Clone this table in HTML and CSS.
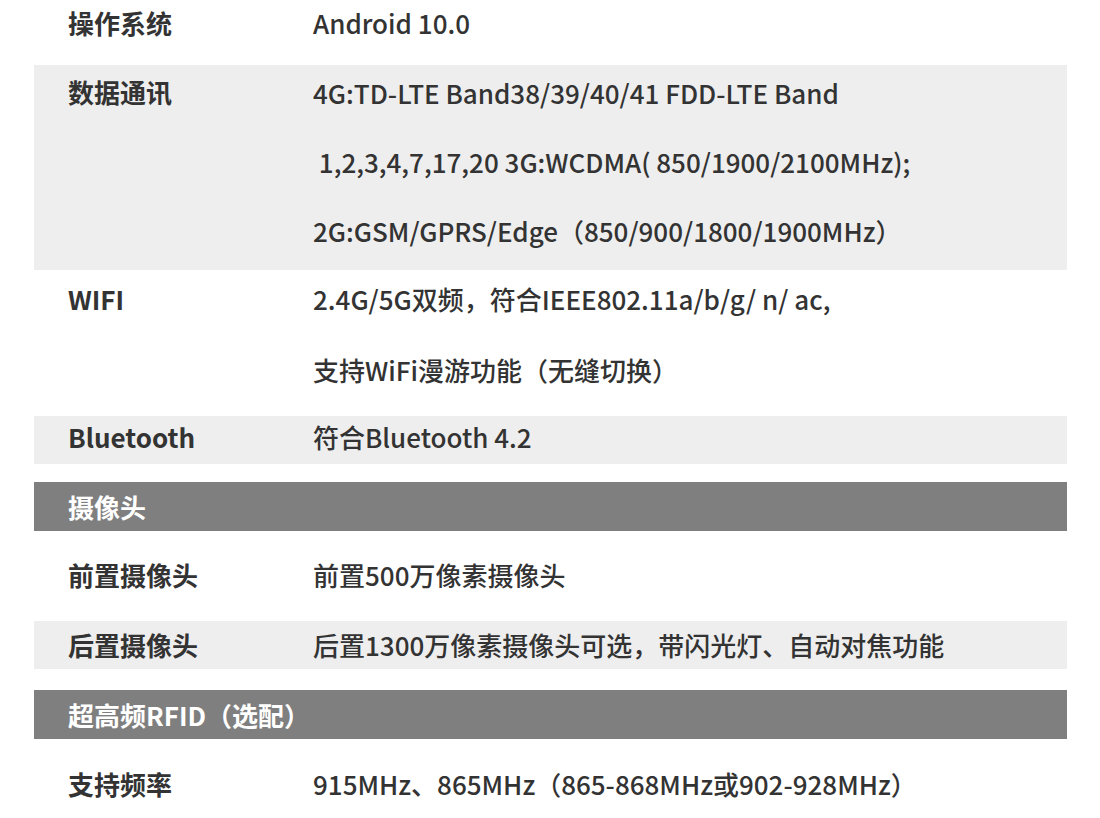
FILE: index.html
```html
<!DOCTYPE html>
<html lang="zh-CN">
<head>
<meta charset="utf-8">
<title>参数</title>
<link rel="stylesheet" href="styles.css">
</head>
<body>
<div class="spec">
  <div class="row r-os">
    <div class="label">操作系统</div>
    <div class="value"><p class="line">Android 10.0</p></div>
  </div>
  <div class="row grey r-data">
    <div class="label">数据通讯</div>
    <div class="value lines-data">
      <p class="line">4G:TD-LTE Band38/39/40/41 FDD-LTE Band</p>
      <p class="line"> 1,2,3,4,7,17,20 3G:WCDMA( 850/1900/2100MHz);</p>
      <p class="line">2G:GSM/GPRS/Edge（850/900/1800/1900MHz）</p>
    </div>
  </div>
  <div class="row r-wifi">
    <div class="label">WIFI</div>
    <div class="value lines-wifi">
      <p class="line">2.4G/5G双频，符合IEEE802.11a/b/g/ n/ ac,</p>
      <p class="line">支持WiFi漫游功能（无缝切换）</p>
    </div>
  </div>
  <div class="row grey r-bt">
    <div class="label">Bluetooth</div>
    <div class="value"><p class="line">符合Bluetooth 4.2</p></div>
  </div>

  <div class="section s-camera">摄像头</div>
  <div class="row r-front">
    <div class="label">前置摄像头</div>
    <div class="value"><p class="line">前置500万像素摄像头</p></div>
  </div>
  <div class="row grey r-rear">
    <div class="label">后置摄像头</div>
    <div class="value"><p class="line">后置1300万像素摄像头可选，带闪光灯、自动对焦功能</p></div>
  </div>

  <div class="section s-rfid">超高频RFID（选配）</div>
  <div class="row r-freq">
    <div class="label">支持频率</div>
    <div class="value"><p class="line">915MHz、865MHz（865-868MHz或902-928MHz）</p></div>
  </div>
</div>
</body>
</html>
```

FILE: styles.css
```css
html, body {
  margin: 0;
  padding: 0;
  background: #ffffff;
}

body {
  font-family: "Noto Sans CJK SC", "Noto Sans", sans-serif;
  font-size: 26px;
  color: #333333;
}

.spec {
  width: 1033px;
  margin-left: 34px;
}

.row {
  display: flex;
  align-items: flex-start;
}

.grey {
  background: #eeeeee;
}

.label {
  flex: 0 0 279px;
  box-sizing: border-box;
  padding-left: 34px;
  font-weight: 700;
  line-height: 30px;
  color: #333333;
}

.value {
  flex: 1 1 auto;
  display: flex;
  flex-direction: column;
  font-weight: 500;
}

.line {
  margin: 0;
  line-height: 30px;
  white-space: pre;
}

.r-os { padding: 8px 0 27px; }

.r-data { padding: 12px 0 24px; }
.lines-data { margin-top: 1px; gap: 39px; }

.r-wifi { padding: 14px 0 31px; }
.lines-wifi { margin-top: 0; gap: 41px; }

.r-bt { padding: 6px 0 12px; }

.section {
  background: #7f7f7f;
  color: #ffffff;
  font-weight: 700;
  line-height: 30px;
  padding: 10px 0 9px 34px;
}

.s-camera { margin-top: 18px; }
.s-rfid { margin-top: 21px; }

.r-front { padding: 29px 0 31px; }
.r-rear { padding: 9px 0 9px; }
.r-freq { padding: 30px 0 22px; }
```
